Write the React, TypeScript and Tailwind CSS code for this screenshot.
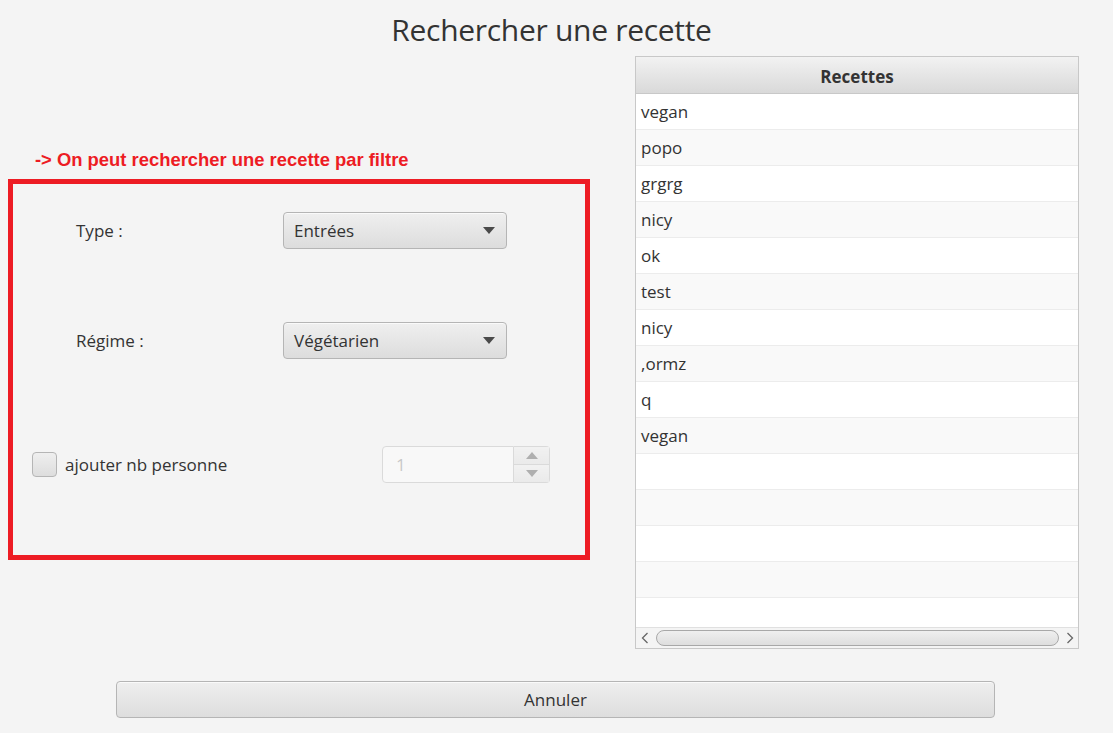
import React from "react";

const font = { fontFamily: '"Open Sans", "Noto Sans", sans-serif' };

function Combo({ value }: { value: string }) {
  return (
    <div className="w-[224px] h-[37px] rounded-[4px] border border-[#b5b5b5] bg-gradient-to-b from-[#efefef] to-[#dddddd] shadow-[inset_0_1px_0_#fafafa] flex items-center justify-between pl-[10px] pr-[11px] text-[17px] text-[#333]">
      <span className="leading-none">{value}</span>
      <svg width="12" height="7" viewBox="0 0 12 7"><path d="M0 0 L12 0 L6 7 Z" fill="#4a4a4a" /></svg>
    </div>
  );
}

const rows = ["vegan", "popo", "grgrg", "nicy", "ok", "test", "nicy", ",ormz", "q", "vegan", "", "", "", "", ""];

export default function App() {
  return (
    <div className="w-[1113px] h-[733px] bg-[#f4f4f4] overflow-hidden text-[#333]" style={font}>
      <div className="h-[56px] flex items-start justify-center pt-[9px] pr-[10px]">
        <h1 className="text-[30px] leading-[42px] text-[#333] tracking-[-0.3px]">Rechercher une recette</h1>
      </div>
      <div className="flex">
        <div className="ml-[8px] w-[582px]">
          <div className="mt-[94px] ml-[27px] h-[20px] leading-[20px] text-[18.4px] font-bold text-[#ed1c24]" style={{ fontFamily: '"Liberation Sans", Arial, sans-serif' }}>
            -&gt; On peut rechercher une recette par filtre
          </div>
          <div className="mt-[9px] h-[381px] border-[5px] border-[#ed1c24]">
            <div className="pt-[28px] flex items-center">
              <div className="w-[270px] pl-[63px] text-[17px]">Type :</div>
              <Combo value="Entrées" />
            </div>
            <div className="mt-[73px] flex items-center">
              <div className="w-[270px] pl-[63px] text-[17px]">Régime :</div>
              <Combo value="Végétarien" />
            </div>
            <div className="mt-[87px] flex items-center">
              <div className="w-[369px] pl-[19px] flex items-center">
                <div className="w-[25px] h-[25px] rounded-[4px] border border-[#b5b5b5] bg-gradient-to-b from-[#efefef] to-[#dddddd]" />
                <span className="ml-[8px] text-[17px]">ajouter nb personne</span>
              </div>
              <div className="flex w-[168px] h-[37px] opacity-40">
                <div className="flex-1 border border-[#b5b5b5] rounded-l-[4px] bg-white flex items-center pl-[13px] text-[17px] text-[#888]">1</div>
                <div className="w-[36px] flex flex-col border border-l-0 border-[#b5b5b5] rounded-r-[4px]">
                  <div className="flex-1 flex items-center justify-center bg-gradient-to-b from-[#efefef] to-[#dddddd] border-b border-[#b5b5b5]">
                    <svg width="12" height="7" viewBox="0 0 12 7"><path d="M0 7 L12 7 L6 0 Z" fill="#4a4a4a" /></svg>
                  </div>
                  <div className="flex-1 flex items-center justify-center bg-gradient-to-b from-[#efefef] to-[#dddddd]">
                    <svg width="12" height="7" viewBox="0 0 12 7"><path d="M0 0 L12 0 L6 7 Z" fill="#4a4a4a" /></svg>
                  </div>
                </div>
              </div>
            </div>
          </div>
        </div>
        <div className="ml-[45px] w-[444px] h-[593px] border border-[#c8c8c8] bg-white flex flex-col">
          <div className="h-[37px] shrink-0 border-b border-[#c8c8c8] bg-gradient-to-b from-[#f2f2f2] to-[#d9d9d9] flex items-center justify-center pt-[3px] text-[17px] font-bold text-[#333]">
            Recettes
          </div>
          <div className="flex-1 overflow-hidden">
            {rows.map((r, i) => (
              <div key={i} className={`h-[36px] border-b border-[#ececec] flex items-center pl-[5px] text-[17px] text-[#333] ${i % 2 === 0 ? "bg-white" : "bg-[#f9f9f9]"}`}>
                {r}
              </div>
            ))}
          </div>
          <div className="h-[21px] shrink-0 bg-[#f4f4f4] border-t border-[#e0e0e0] flex items-center">
            <svg className="ml-[5px]" width="8" height="12" viewBox="0 0 8 12"><path d="M6.5 1 L1.5 6 L6.5 11" stroke="#666" strokeWidth="1.3" fill="none" /></svg>
            <div className="ml-[7px] w-[403px] h-[16px] rounded-[8px] border border-[#a8a8a8] bg-gradient-to-b from-[#efefef] to-[#dedede]" />
            <svg className="ml-[7px]" width="8" height="12" viewBox="0 0 8 12"><path d="M1.5 1 L6.5 6 L1.5 11" stroke="#666" strokeWidth="1.3" fill="none" /></svg>
          </div>
        </div>
      </div>
      <div className="mt-[32px] ml-[116px] w-[879px] h-[37px] rounded-[4px] border border-[#b5b5b5] bg-gradient-to-b from-[#efefef] to-[#dddddd] shadow-[inset_0_1px_0_#fafafa] flex items-center justify-center text-[17px] text-[#333]">
        Annuler
      </div>
    </div>
  );
}
